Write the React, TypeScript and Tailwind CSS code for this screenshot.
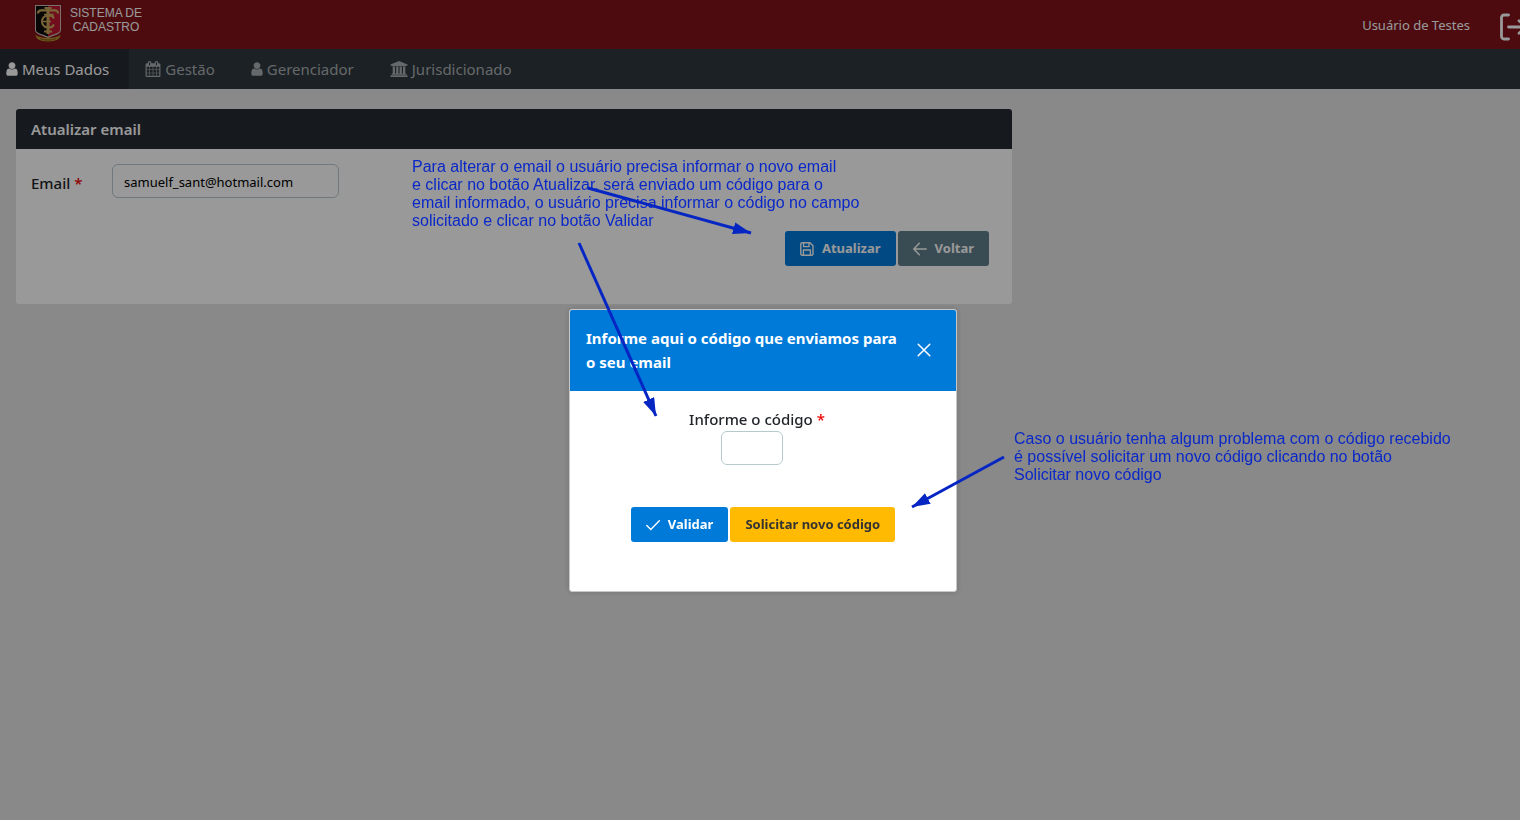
import React, { useState } from 'react';

interface NavItem {
  label: string;
  icon: React.ReactNode;
  active?: boolean;
}

const UserIcon = () => (
  <svg viewBox="256 0 1280 1792" className="h-4 w-3 shrink-0" fill="currentColor" aria-hidden="true">
    <path d="M1536 1399q0 109-62.5 187t-150.5 78h-854q-88 0-150.5-78t-62.5-187q0-85 8.5-160.5t31.5-152 58.5-131 94-89 134.5-34.5q131 128 313 128t313-128q76 0 134.5 34.5t94 89 58.5 131 31.5 152 8.5 160.5zm-256-887q0 159-112.5 271.5t-271.5 112.5-271.5-112.5-112.5-271.5 112.5-271.5 271.5-112.5 271.5 112.5 112.5 271.5z" />
  </svg>
);

const CalendarIcon = () => (
  <svg viewBox="0 0 1792 1792" className="h-4 w-4 shrink-0" fill="currentColor" aria-hidden="true">
    <path d="M192 1664h288v-288h-288v288zm352 0h320v-288h-320v288zm-352-352h288v-320h-288v320zm352 0h320v-320h-320v320zm-352-384h288v-288h-288v288zm736 736h320v-288h-320v288zm-384-736h320v-288h-320v288zm768 736h288v-288h-288v288zm-384-352h320v-320h-320v320zm-352-864v-288q0-13-9.5-22.5t-22.5-9.5h-64q-13 0-22.5 9.5t-9.5 22.5v288q0 13 9.5 22.5t22.5 9.5h64q13 0 22.5-9.5t9.5-22.5zm736 864h288v-320h-288v320zm-384-384h320v-288h-320v288zm384 0h288v-288h-288v288zm32-480v-288q0-13-9.5-22.5t-22.5-9.5h-64q-13 0-22.5 9.5t-9.5 22.5v288q0 13 9.5 22.5t22.5 9.5h64q13 0 22.5-9.5t9.5-22.5zm384-64v1280q0 52-38 90t-90 38h-1408q-52 0-90-38t-38-90v-1280q0-52 38-90t90-38h128v-96q0-66 47-113t113-47h64q66 0 113 47t47 113v96h384v-96q0-66 47-113t113-47h64q66 0 113 47t47 113v96h128q52 0 90 38t38 90z" />
  </svg>
);

const UniversityIcon = () => (
  <svg viewBox="-128 0 1920 1792" className="h-4 w-[18px] shrink-0" fill="currentColor" aria-hidden="true">
    <path d="M832 0l960 384v128h-128q0 26-20.5 45t-48.5 19h-1526q-28 0-48.5-19t-20.5-45h-128v-128zm-704 640h256v768h128v-768h256v768h128v-768h256v768h128v-768h256v768h59q28 0 48.5 19t20.5 45v64h-1664v-64q0-26 20.5-45t48.5-19h59v-768zm1595 960q28 0 48.5 19t20.5 45v128h-1920v-128q0-26 20.5-45t48.5-19h1782z" />
  </svg>
);

const SaveIcon = () => (
  <svg viewBox="0 0 14 14" className="size-3.5 shrink-0" fill="none" stroke="currentColor" strokeWidth="1.4" strokeLinejoin="round" aria-hidden="true">
    <path d="M2 .8h8l3 3v8.200a1.200 1.200 0 0 1-1.200 1.200H2A1.200 1.200 0 0 1 .8 12V2A1.200 1.200 0 0 1 2 .8z" />
    <path d="M3.600 1v3.600h5.400V1M3.400 13V8h7v5" />
  </svg>
);

const ArrowLeftIcon = () => (
  <svg viewBox="0 0 14 14" className="size-3.5 shrink-0" fill="none" stroke="currentColor" strokeWidth="1.5" strokeLinecap="round" strokeLinejoin="round" aria-hidden="true">
    <path d="M13.300 7H.9M6.300 1.300.8 7l5.500 5.700" />
  </svg>
);

const CheckIcon = () => (
  <svg viewBox="0 0 14 14" className="size-3.5 shrink-0" fill="none" stroke="currentColor" strokeWidth="1.4" strokeLinecap="round" strokeLinejoin="round" aria-hidden="true">
    <path d="M.8 7.600 4.800 11.400 13.300 2.800" />
  </svg>
);

const SignOutIcon = () => (
  <svg viewBox="0 0 28 28" className="size-7 shrink-0" fill="none" stroke="currentColor" strokeWidth="2.8" strokeLinecap="round" strokeLinejoin="round" aria-hidden="true">
    <path d="M8.500 2H4A2.500 2.500 0 0 0 1.500 4.500v19A2.500 2.500 0 0 0 4 26h4.500M8.500 14H26M19 7.800 26 14l-7 6.200" />
  </svg>
);

const Crest = () => (
  <svg viewBox="0 0 28 38" className="h-[38px] w-7 shrink-0" aria-hidden="true">
    <path d="M1 1h26v25c0 4-6 5-13 8C7 31 1 30 1 26z" fill="#c9bdb4" />
    <path d="M2 2h12v30.500C8 30 2 29 2 26z" fill="#0c0c0e" />
    <path d="M14 2h12v24c0 3-6 4-12 6.500z" fill="#bd1730" />
    <g fill="none" stroke="#c9a75c">
      <path d="M4 9.500C4 5 8 6.500 14 6.500S24 5 24 9.500" strokeWidth="2.400" />
      <path d="M14 3.500V30" strokeWidth="3" />
      <path d="M10.500 4h7M10 27.500h8" strokeWidth="1.800" />
      <path d="M20 14.500c-2-4.500-12-4-12 3s10 7.500 12 3" strokeWidth="2" />
      <path d="M10 10.500h9v3M9 17.500h8M10.500 24l3.500-2 3.500 2" strokeWidth="1.400" />
    </g>
    <path d="M1 30.500c4 4.500 22 4.500 26 0l-2 4c-4 4-18 4-22 0z" fill="#b8922f" />
    <path d="M6 34.500c4 2 12 2 16 0" fill="none" stroke="#6b4e14" strokeWidth=".8" />
  </svg>
);

const NAV_ITEMS: NavItem[] = [
  { label: 'Meus Dados', icon: <UserIcon />, active: true },
  { label: 'Gestão', icon: <CalendarIcon /> },
  { label: 'Gerenciador', icon: <UserIcon /> },
  { label: 'Jurisdicionado', icon: <UniversityIcon /> }
];

const ARROWS = [
  { x1: 588, y1: 188, x2: 751, y2: 233 },
  { x1: 579, y1: 243, x2: 656, y2: 416 },
  { x1: 1004, y1: 457, x2: 912, y2: 507 }
];

const Header: React.FC = () => (
  <header className="flex h-[49px] items-center justify-between overflow-hidden bg-[#80121a] text-white">
    <div className="flex items-center gap-2 pb-1 pl-[34px]">
      <Crest />
      <p className="pb-1.5 text-center font-['Liberation_Sans',sans-serif] text-[12px] leading-[14px]">
        SISTEMA DE
        <br />
        CADASTRO
      </p>
    </div>
    <div className="-mr-2 flex items-center gap-[30px]">
      <span className="text-[13px] leading-5">Usuário de Testes</span>
      <button type="button" aria-label="Sair" className="pt-1">
        <SignOutIcon />
      </button>
    </div>
  </header>
);

const Nav: React.FC = () => (
  <nav className="flex h-10 bg-[#2f383e] text-[15px] leading-6">
    {NAV_ITEMS.map((item) => (
      <a
        key={item.label}
        href="#"
        className={
          item.active
            ? 'flex items-center gap-1 bg-[#252a33] pr-5 pl-1.5 text-white'
            : 'flex items-center gap-1 pr-5 pl-4 text-[#abafb2]'
        }
      >
        {item.icon}
        {item.label}
      </a>
    ))}
  </nav>
);

const EmailCard: React.FC = () => {
  const [email, setEmail] = useState('samuelf_sant@hotmail.com');

  return (
    <section className="w-2/3 overflow-hidden rounded-[3px] bg-white text-[#212529]">
      <h1 className="bg-[#252a33] px-[15px] py-2 text-[15px] leading-6 font-semibold text-white">Atualizar email</h1>
      <form className="pt-[15px] pr-[23px] pb-[38px] pl-[15px]">
        <div className="flex items-center">
          <label htmlFor="email" className="w-[81px] pt-1 text-[15px] leading-6 font-medium">
            Email <span className="text-[#f00000]">*</span>
          </label>
          <input
            id="email"
            type="text"
            value={email}
            onChange={(e) => setEmail(e.target.value)}
            className="h-[34px] w-[227px] rounded-md border border-[#b8c8d0] px-[11px] pt-0.5 text-[13px] text-black"
          />
        </div>
        <div className="mt-[33px] flex justify-end gap-0.5 text-[13px] font-bold text-white">
          <button type="button" className="flex h-[35px] items-center gap-2 rounded-[3px] bg-[#007ad9] px-[15px]">
            <SaveIcon />
            Atualizar
          </button>
          <button type="button" className="flex h-[35px] items-center gap-2 rounded-[3px] bg-[#607d8b] px-[15px]">
            <ArrowLeftIcon />
            Voltar
          </button>
        </div>
      </form>
    </section>
  );
};

const CodeDialog: React.FC = () => {
  const [code, setCode] = useState('');

  return (
    <div className="fixed inset-0 flex items-start justify-center bg-black/40 pt-[309px] pl-1.5">
      <div
        role="dialog"
        aria-labelledby="dialog-title"
        className="w-[388px] overflow-hidden rounded-[3px] border border-[#c8c8c8] bg-white shadow-[0_0_6px_rgba(0,0,0,0.16)]"
      >
        <div className="flex items-center justify-between border-b border-[#007ad9] bg-[#007ad9] p-4 text-white">
          <h2 id="dialog-title" className="text-[15px] leading-6 font-bold">
            Informe aqui o código que enviamos para o seu email
          </h2>
          <button type="button" aria-label="Fechar" className="flex size-8 shrink-0 items-center justify-center">
            <svg viewBox="0 0 14 14" className="size-3.5" fill="none" stroke="currentColor" strokeWidth="1.5" strokeLinecap="round">
              <path d="M1.200 1.200l11.600 11.600M12.800 1.200 1.200 12.800" />
            </svg>
          </button>
        </div>
        <form className="flex flex-col items-center px-4 pt-4 pb-[49px] text-[#212529]">
          <div className="flex flex-col items-center pr-3">
            <label htmlFor="code" className="text-[15px] leading-6 font-medium">
              Informe o código <span className="text-[#f00000]">*</span>
            </label>
            <input
              id="code"
              type="text"
              value={code}
              onChange={(e) => setCode(e.target.value)}
              className="mr-2.5 h-[34px] w-[62px] rounded-md border border-[#b8c8d0] px-[11px] text-[13px]"
            />
          </div>
          <div className="mt-[42px] flex gap-0.5 text-[13px] font-bold">
            <button type="button" className="flex h-[35px] items-center gap-2 rounded-[3px] bg-[#007ad9] px-[15px] text-white">
              <CheckIcon />
              Validar
            </button>
            <button type="button" className="flex h-[35px] items-center rounded-[3px] bg-[#ffba01] px-[15px] text-[#333333]">
              Solicitar novo código
            </button>
          </div>
        </form>
      </div>
    </div>
  );
};

// Tutorial notes and arrows drawn over the screen
const Notes: React.FC = () => (
  <div className="pointer-events-none fixed inset-0 overflow-hidden font-['Liberation_Sans',sans-serif] text-[16px] leading-[18px] text-[#0a28c8]">
    <p className="absolute top-[158px] left-[412px] whitespace-nowrap">
      Para alterar o email o usuário precisa informar o novo email
      <br />
      e clicar no botão Atualizar, será enviado um código para o
      <br />
      email informado, o usuário precisa informar o código no campo
      <br />
      solicitado e clicar no botão Validar
    </p>
    <p className="absolute top-[430px] left-[1014px] whitespace-nowrap">
      Caso o usuário tenha algum problema com o código recebido
      <br />
      é possível solicitar um novo código clicando no botão
      <br />
      Solicitar novo código
    </p>
    <svg className="absolute inset-0 size-full" aria-hidden="true">
      <defs>
        <marker id="head" viewBox="0 0 18 12" refX="18" refY="6" markerWidth="18" markerHeight="12" markerUnits="userSpaceOnUse" orient="auto">
          <path d="M0 0 18 6 0 12z" fill="#0626c4" />
        </marker>
      </defs>
      {ARROWS.map((a) => (
        <path key={a.x1} d={`M${a.x1} ${a.y1}L${a.x2} ${a.y2}`} stroke="#0626c4" strokeWidth="3" markerEnd="url(#head)" />
      ))}
    </svg>
  </div>
);

const App: React.FC = () => {
  return (
    <div className="min-h-screen overflow-hidden bg-[#e4e4e4] font-['Noto_Sans',sans-serif]">
      <Header />
      <Nav />
      <main className="pt-5 pr-2.5 pl-4">
        <EmailCard />
      </main>
      <CodeDialog />
      <Notes />
    </div>
  );
};

export default App;
